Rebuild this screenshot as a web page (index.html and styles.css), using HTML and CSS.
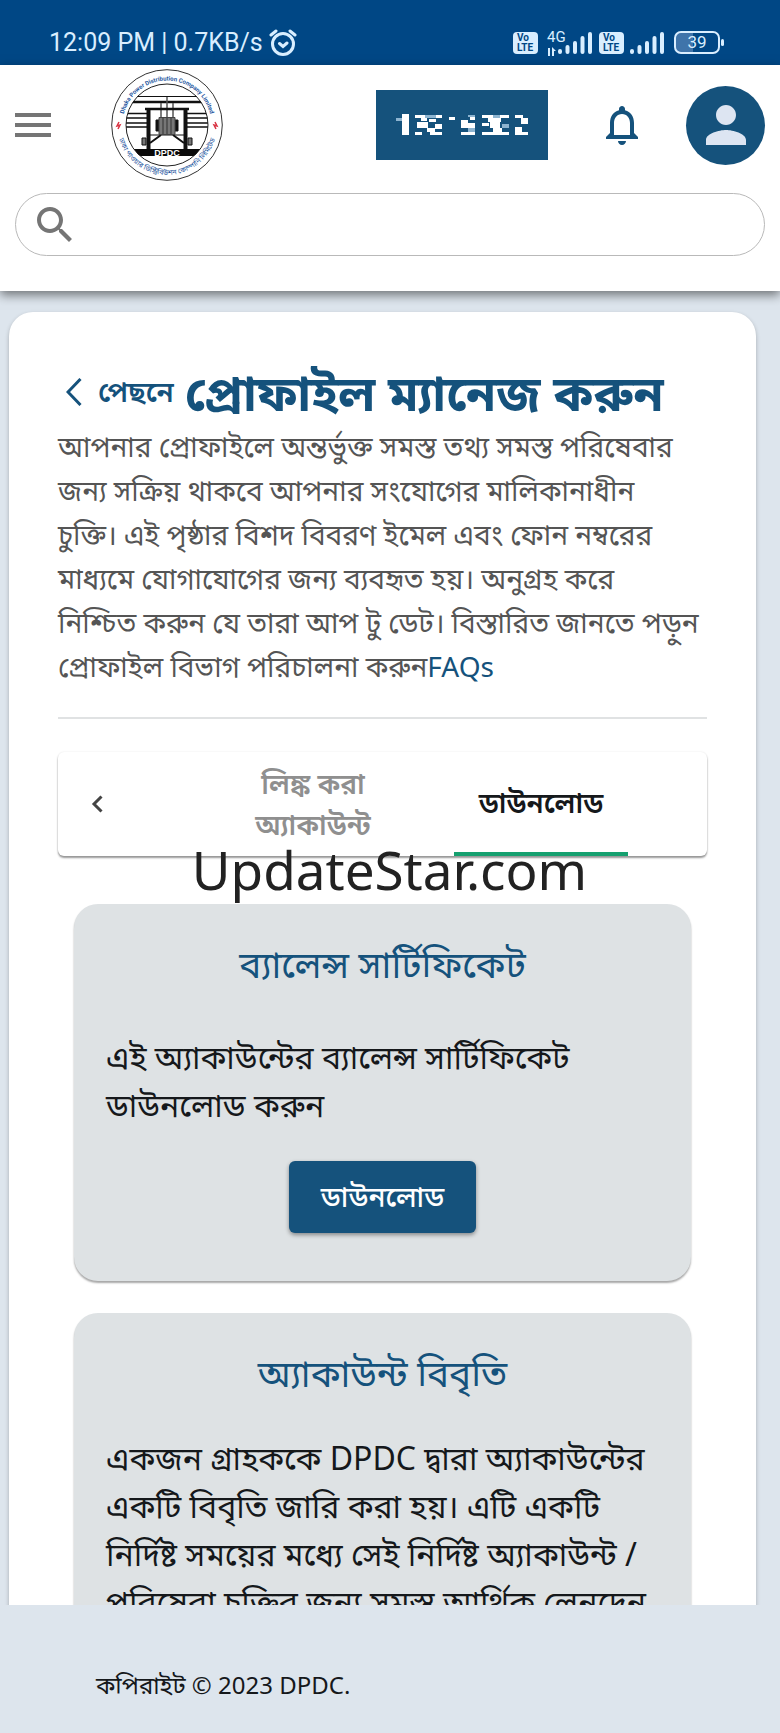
FILE: index.html
```html
<!DOCTYPE html>
<html lang="bn">
<head>
<meta charset="utf-8">
<meta name="viewport" content="width=device-width, initial-scale=1">
<title>DPDC</title>
<link rel="stylesheet" href="styles.css">
</head>
<body>
<div class="app">
  <div class="status">
    <div class="status-left">
      <span>12:09 PM | 0.7KB/s</span>
      <svg class="alarm" viewBox="0 0 28 28" fill="none" stroke="currentColor" stroke-width="3" stroke-linecap="round"><circle cx="14" cy="15" r="10.5"/><path d="M10.5 14.5l3.5 3 4-3.5M2 6l5-4M26 6l-5-4"/></svg>
    </div>
    <div class="status-right">
      <span class="volte"><span>Vo</span><span>LTE</span></span>
      <span class="net"><span class="gen">4G</span><svg class="arrows" viewBox="0 0 12 9" fill="currentColor"><path d="M0 5l3 4V1h2v8H3zM7 9V0l4 4H9v5z"/></svg></span>
      <svg class="signal" viewBox="0 0 35 23" stroke="currentColor" stroke-width="4" stroke-linecap="round"><path d="M2 21v-1M9.500 21v-5M17 21v-9M24.500 21V7M32 21V3"/></svg>
      <span class="volte"><span>Vo</span><span>LTE</span></span>
      <svg class="signal" viewBox="0 0 35 23" stroke="currentColor" stroke-width="4" stroke-linecap="round"><path d="M2 21v-1M9.500 21v-5M17 21v-9M24.500 21V7M32 21V3"/></svg>
      <span class="battery">39</span>
    </div>
  </div>

  <header class="header">
    <div class="bar">
      <button class="icon-btn menu" aria-label="Menu"><svg viewBox="0 0 36 24" fill="#757575"><path d="M0 0h36v4H0zM0 10h36v4H0zM0 20h36v4H0z"/></svg></button>
      <svg class="logo" viewBox="0 0 112 112" role="img" aria-label="DPDC">
        <defs>
          <path id="ring-top" d="M11.500 56a44.500 44.500 0 0 1 89 0"/>
          <path id="ring-bottom" d="M6 56a50 50 0 0 0 100 0"/>
          <clipPath id="disc"><circle cx="56" cy="56" r="41"/></clipPath>
        </defs>
        <circle cx="56" cy="56" r="55.300" fill="#fff" stroke="#333"/>
        <circle cx="56" cy="56" r="41" fill="#fff" stroke="#222"/>
        <g clip-path="url(#disc)" stroke="#111" fill="none">
          <path d="M10 27.500h92" stroke-width="1"/>
          <path d="M10 33h92" stroke-width="2.500"/>
          <path d="M10 44.500h28M74 44.500h28M10 49h28M74 49h28M10 54h28M74 54h28M10 58h28M74 58h28" stroke-width="1.500"/>
          <path d="M56 28v21M50 34v15M62 34v15" stroke="#555" stroke-width="1.500"/>
          <path d="M34 40h44" stroke-width="2.500"/>
          <path d="M37.500 40v42M74.500 40v42" stroke-width="4"/>
          <path d="M39 66h34" stroke-width="1"/>
          <path d="M50 66L39 74M62 66l11 8" stroke-width="2"/>
          <path d="M31 69h4v7h-4zM77 69h4v7h-4z" fill="#777"/>
          <path d="M45 51h22v11H45z" fill="#111"/>
          <path d="M48 48.500h16v17H48z" fill="#777" stroke="#444"/>
          <path d="M52 49v16M56 49v16M60 49v16" stroke="#333"/>
          <path d="M10 80h92v7H10z" fill="#0a0a0a" stroke="none"/>
        </g>
        <text class="logo-name" x="56" y="86.500" text-anchor="middle">DPDC</text>
        <text class="logo-ring"><textPath href="#ring-top" startOffset="50%" text-anchor="middle">Dhaka Power Distribution Company Limited</textPath></text>
        <text class="logo-ring logo-ring-bn"><textPath href="#ring-bottom" startOffset="50%" text-anchor="middle">ঢাকা পাওয়ার ডিস্ট্রিবিউশন কোম্পানি লিমিটেড</textPath></text>
        <path d="M8 53l-2 4 3-1-2 4M104 53l2 4-3-1 2 4" fill="none" stroke="#d93545" stroke-width="1.500"/>
      </svg>
      <button class="account" aria-label="Account">
        <svg viewBox="0 0 132 22" shape-rendering="crispEdges"><path fill="#fff" d="M6 0h7v21H6zM19 1h10v3H19zM40 1h6v3h-6zM25 4h6v3h-6zM33 5h7v3h-7zM21 8h11v6H21zM39 10h7v5h-7zM31 14h8v4h-8zM19 18h7v3h-7zM34 18h12v3H34zM53 3h6v3h-6zM65 6h7v8h-7zM74 3h5v3h-5zM72 9h7v5h-7zM65 18h14v3H65zM86 1h11v3H86zM104 1h9v3h-9zM92 4h13v4H92zM86 9h7v3h-7zM94 8h10v6H94zM97 14h9v4h-9zM86 18h27v3H86zM119 1h8v3h-8zM125 4h7v6h-7zM119 13h7v5h-7zM119 18h13v3h-13z"/><path fill="#8db4d0" d="M0 4h6v3H0zM29 1h11v3H29zM72 14h7v4h-7zM97 1h7v3h-7zM106 10h7v4h-7zM72 1h7v2h-7z"/></svg>
      </button>
      <button class="icon-btn bell" aria-label="Notifications"><svg viewBox="0 0 24 24" fill="#15527c"><path d="M12 22c1.100 0 2-.9 2-2h-4c0 1.100.9 2 2 2zm6-6v-5c0-3.070-1.630-5.640-4.500-6.320V4c0-.83-.67-1.500-1.500-1.500s-1.500.67-1.500 1.500v.68C7.640 5.360 6 7.920 6 11v5l-2 2v1h16v-1l-2-2zm-2 1H8v-6c0-2.480 1.510-4.500 4-4.500s4 2.020 4 4.500v6z"/></svg></button>
      <button class="avatar" aria-label="Profile"><svg viewBox="0 0 24 24" fill="#dde5f2"><path d="M12 12c2.210 0 4-1.790 4-4s-1.790-4-4-4-4 1.790-4 4 1.790 4 4 4zm0 2c-2.670 0-8 1.340-8 4v2h16v-2c0-2.660-5.330-4-8-4z"/></svg></button>
    </div>
    <label class="search">
      <svg viewBox="0 0 24 24" fill="#757575"><path d="M15.500 14h-.79l-.28-.27C15.410 12.590 16 11.110 16 9.500 16 5.910 13.090 3 9.500 3S3 5.910 3 9.500 5.910 16 9.500 16c1.610 0 3.090-.59 4.230-1.570l.27.28v.79l5 4.990L20.490 19l-4.990-5zm-6 0C7.010 14 5 11.990 5 9.500S7.010 5 9.500 5 14 7.010 14 9.500 11.990 14 9.500 14z"/></svg>
      <input type="search" aria-label="Search">
    </label>
  </header>

  <main class="main">
    <section class="page">
      <div class="title-row">
        <a class="back" href="#"><svg viewBox="0 0 16 28" fill="none" stroke="currentColor" stroke-width="3"><path d="M14.500 1L2 14l12.500 13"/></svg>পেছনে</a>
        <h1>প্রোফাইল ম্যানেজ করুন</h1>
      </div>
      <p class="intro">আপনার প্রোফাইলে অন্তর্ভুক্ত সমস্ত তথ্য সমস্ত পরিষেবার<br>জন্য সক্রিয় থাকবে আপনার সংযোগের মালিকানাধীন<br>চুক্তি। এই পৃষ্ঠার বিশদ বিবরণ ইমেল এবং ফোন নম্বরের<br>মাধ্যমে যোগাযোগের জন্য ব্যবহৃত হয়। অনুগ্রহ করে<br>নিশ্চিত করুন যে তারা আপ টু ডেট। বিস্তারিত জানতে পড়ুন<br>প্রোফাইল বিভাগ পরিচালনা করুন<a href="#">FAQs</a></p>
      <hr>
      <div class="tabs" role="tablist">
        <button class="prev" aria-label="Previous"><svg viewBox="0 0 12 18" fill="none" stroke="#444" stroke-width="3"><path d="M10.500 1.500L3 9l7.500 7.500"/></svg></button>
        <button class="tab" role="tab">লিঙ্ক করা অ্যাকাউন্ট</button>
        <button class="tab active" role="tab" aria-selected="true">ডাউনলোড</button>
        <div class="watermark">UpdateStar.com</div>
      </div>
      <div class="cards">
        <article class="card">
          <h2>ব্যালেন্স সার্টিফিকেট</h2>
          <p>এই অ্যাকাউন্টের ব্যালেন্স সার্টিফিকেট ডাউনলোড করুন</p>
          <button class="download">ডাউনলোড</button>
        </article>
        <article class="card statement">
          <h2>অ্যাকাউন্ট বিবৃতি</h2>
          <p>একজন গ্রাহককে DPDC দ্বারা অ্যাকাউন্টের একটি বিবৃতি জারি করা হয়। এটি একটি নির্দিষ্ট সময়ের মধ্যে সেই নির্দিষ্ট অ্যাকাউন্ট / পরিষেবা চুক্তির জন্য সমস্ত আর্থিক লেনদেন</p>
        </article>
      </div>
    </section>
  </main>
  <footer class="footer">কপিরাইট © 2023 DPDC.</footer>
</div>
</body>
</html>
```

FILE: styles.css
```css
* { box-sizing: border-box; }
body {
  margin: 0;
  font-family: "Noto Sans", "Noto Sans Bengali", sans-serif;
  color: #15181b;
  background: #dde5ed;
}
h1, h2, p { margin: 0; }
button { font: inherit; border: 0; padding: 0; background: none; cursor: pointer; }
svg { display: block; }
a { color: #15527c; text-decoration: none; }
.app { display: flex; flex-direction: column; height: 100vh; }

.status {
  display: flex;
  justify-content: space-between;
  align-items: center;
  height: 65px;
  padding: 20px 60px 0 49px;
  background: #004785;
  color: #d9eeff;
  font-size: 25px;
  font-family: Roboto, "Noto Sans", sans-serif;
  flex: none;
}
.status-left, .status-right { display: flex; align-items: center; gap: 6px; }
.alarm { width: 28px; height: 28px; }
.volte {
  display: flex;
  flex-direction: column;
  width: 25px;
  height: 22px;
  padding: 1px 0 1px 4px;
  border-radius: 4px;
  background: #d9eeff;
  color: #004785;
  font: bold 10px/10px Roboto, "Noto Sans", sans-serif;
}
.net { display: flex; flex-direction: column; width: 12px; height: 28px; margin-left: 1px; }
.gen { font-size: 15px; line-height: 16px; margin-left: 2px; }
.arrows { width: 12px; height: 9px; margin-top: 2px; }
.signal { width: 35px; height: 23px; }
.net + .signal { margin-left: -5px; }
.battery {
  position: relative;
  width: 46px;
  height: 23px;
  margin-left: 3px;
  border: 2px solid currentColor;
  border-radius: 7px;
  font-size: 17px;
  line-height: 19px;
  text-align: center;
  background: linear-gradient(90deg, #3f74aa 40%, transparent 40%);
}
.battery::after {
  content: "";
  position: absolute;
  top: 6px;
  right: -6px;
  width: 3px;
  height: 7px;
  border-radius: 2px;
  background: currentColor;
}

.header {
  flex: none;
  position: relative;
  z-index: 1;
  padding: 4px 15px 35px;
  background: #fff;
  box-shadow: 0 4px 10px rgba(0, 0, 0, .5);
}
.bar { display: flex; align-items: center; height: 112px; }
.menu svg { width: 36px; height: 24px; }
.logo { width: 112px; height: 112px; margin-left: 60px; flex: none; }
.logo-name { font: bold 9px "Liberation Sans", sans-serif; fill: #fff; }
.logo-ring { font: bold 6px Roboto, sans-serif; fill: #1f57a0; }
.logo-ring-bn { font: 7px "Noto Sans", "Noto Sans Bengali", sans-serif; }
.account {
  display: flex;
  align-items: center;
  justify-content: center;
  width: 172px;
  height: 70px;
  margin-left: auto;
  background: #15527c;
}
.account svg { width: 132px; height: 22px; }
.bell { margin: 0 40px 0 50px; }
.bell svg { width: 48px; height: 48px; }
.avatar {
  display: grid;
  place-items: center;
  width: 79px;
  height: 79px;
  border-radius: 50%;
  background: #15527c;
}
.avatar svg { width: 60px; height: 60px; }
.search {
  display: flex;
  align-items: center;
  height: 63px;
  margin-top: 12px;
  padding: 0 15px;
  border: 1px solid #b9b9b9;
  border-radius: 32px;
}
.search svg { width: 48px; height: 48px; }
.search input { flex: 1; min-width: 0; border: 0; outline: 0; background: none; font: 24px "Noto Sans", sans-serif; }

.main { flex: 1; min-height: 0; overflow: hidden; padding: 21px 24px 0 9px; }
.page {
  padding: 48px 49px;
  border-radius: 24px;
  background: #fff;
  box-shadow: 0 2px 4px rgba(0, 0, 0, .25);
}
.title-row { display: flex; align-items: center; gap: 11px; height: 64px; padding-left: 8px; color: #15527c; }
.back { display: flex; align-items: center; gap: 16px; font-size: 28px; font-weight: 600; }
.back svg { width: 16px; height: 28px; }
h1 { font-size: 49px; line-height: 64px; font-weight: 700; white-space: nowrap; }
.intro { font-size: 28px; line-height: 44px; color: #555; }
hr { margin: 29px 0 33px; border: 0; border-top: 2px solid #e0e2e3; }
.tabs {
  position: relative;
  display: flex;
  height: 104px;
  border-radius: 6px;
  background: #fff;
  box-shadow: 0 2px 2px rgba(0, 0, 0, .4), 0 0 2px rgba(0, 0, 0, .1);
}
.prev { width: 78px; display: grid; place-items: center; }
.prev svg { width: 12px; height: 18px; }
.tab { width: 174px; padding: 0 24px; font-size: 28px; line-height: 41px; font-weight: 600; color: #8f8f8f; }
.prev + .tab { margin-left: auto; }
.tab.active { margin: 0 79px 0 54px; padding: 0; color: #15181b; border-bottom: 4px solid #15a06f; }
.watermark {
  position: absolute;
  left: 14px;
  right: 0;
  bottom: -49px;
  text-align: center;
  font: 53px/70px "Noto Sans", sans-serif;
  color: #222;
  pointer-events: none;
}
.cards { display: flex; flex-direction: column; gap: 32px; padding: 48px 16px 0; }
.card {
  display: flex;
  flex-direction: column;
  padding: 32px 32px 48px;
  border-radius: 24px;
  background: #dee2e4;
  box-shadow: 0 2px 2px rgba(0, 0, 0, .35);
}
.card h2 { font-size: 37px; line-height: 56px; font-weight: 400; text-align: center; color: #15527c; }
.card p { margin-top: 41px; font-size: 32px; line-height: 48px; }
.statement p { margin-top: 33px; }
.download {
  align-self: center;
  height: 72px;
  margin-top: 32px;
  padding: 0 32px;
  border-radius: 6px;
  background: #15527c;
  color: #fff;
  font-size: 28px;
  font-weight: 500;
  box-shadow: 0 2px 4px rgba(0, 0, 0, .4);
}
.footer { flex: none; height: 128px; padding: 60px 96px 0; font-size: 24px; line-height: 40px; }
```
